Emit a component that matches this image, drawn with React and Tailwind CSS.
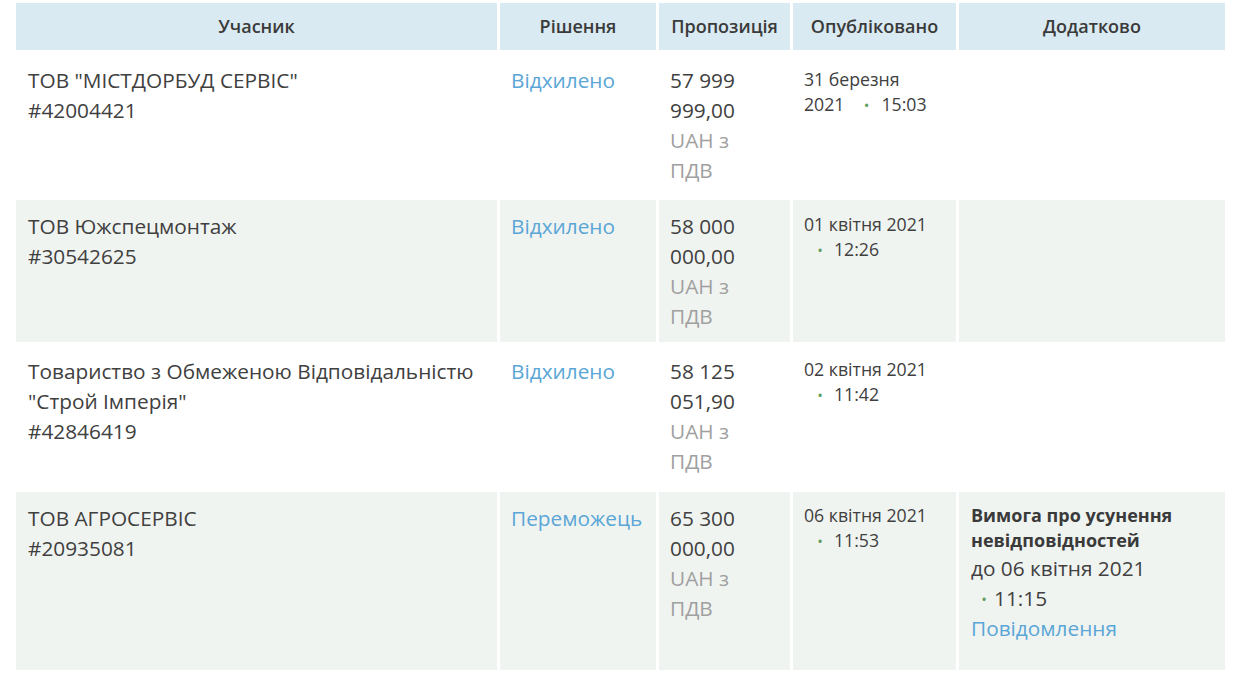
import React from "react";

const Dot = ({ ml }) => (
  <span className={`inline-block ${ml} w-[12px] text-center text-[15px] leading-none align-middle text-[#5f9f5c] relative top-[-1px]`}>•</span>
);

const headers = ["Учасник", "Рішення", "Пропозиція", "Опубліковано", "Додатково"];

const rows = [
  {
    name: ['ТОВ "МІСТДОРБУД СЕРВІС"'],
    code: "#42004421",
    decision: "Відхилено",
    amount: ["57 999", "999,00"],
    dateA: "31 березня",
    dateB: "2021",
    time: "15:03",
    bg: "bg-white",
    pt: "pt-[12px]",
    dpt: "pt-[14px]",
  },
  {
    name: ["ТОВ Южспецмонтаж"],
    code: "#30542625",
    decision: "Відхилено",
    amount: ["58 000", "000,00"],
    dateA: "01 квітня 2021",
    time: "12:26",
    bg: "bg-[#f0f4f1]",
    pt: "pt-[11px]",
    dpt: "pt-[12px]",
  },
  {
    name: ["Товариство з Обмеженою Відповідальністю", '"Строй Імперія"'],
    code: "#42846419",
    decision: "Відхилено",
    amount: ["58 125", "051,90"],
    dateA: "02 квітня 2021",
    time: "11:42",
    bg: "bg-white",
    pt: "pt-[11px]",
    dpt: "pt-[12px]",
  },
  {
    name: ["ТОВ АГРОСЕРВІС"],
    code: "#20935081",
    decision: "Переможець",
    amount: ["65 300", "000,00"],
    dateA: "06 квітня 2021",
    time: "11:53",
    bg: "bg-[#f0f4f1]",
    pt: "pt-[11px]",
    dpt: "pt-[11px]",
    extra: true,
  },
];

export default function App() {
  return (
    <div
      className="w-[1236px] h-[680px] bg-white text-[#404040] overflow-hidden"
      style={{ fontFamily: '"Open Sans", "Noto Sans", sans-serif' }}
    >
      <div className="pl-[16px] pt-[3px]">
        <div className="grid grid-cols-[481px_156px_131px_163px_266px] grid-rows-[47px_144px_142px_144px_178px] gap-[3px]">
          {headers.map((h) => (
            <div
              key={h}
              className="bg-[#d9eaf2] flex items-center justify-center text-[18px] font-semibold text-[#3a3a3a]"
            >
              {h}
            </div>
          ))}
          {rows.map((r, i) => (
            <React.Fragment key={i}>
              <div className={`${r.bg} px-[12px] ${r.pt} text-[20.8px] leading-[30px]`}>
                {r.name.map((n) => (
                  <div key={n}>{n}</div>
                ))}
                <div>{r.code}</div>
              </div>
              <div className={`${r.bg} px-[11px] ${r.pt} text-[20.8px] leading-[30px] text-[#5aa6d6]`}>
                {r.decision}
              </div>
              <div className={`${r.bg} px-[11px] ${r.pt} text-[20.8px] leading-[30px]`}>
                <div>{r.amount[0]}</div>
                <div>{r.amount[1]}</div>
                <div className="text-[#a0a0a0]">UAH з</div>
                <div className="text-[#a0a0a0]">ПДВ</div>
              </div>
              <div className={`${r.bg} px-[11px] ${r.dpt} text-[17.7px] leading-[25px]`}>
                {r.dateB ? (
                  <>
                    <div>{r.dateA}</div>
                    <div>
                      {r.dateB}
                      <Dot ml="ml-[16px]" />
                      <span className="ml-[9px]">{r.time}</span>
                    </div>
                  </>
                ) : (
                  <>
                    <div>{r.dateA}</div>
                    <div>
                      <Dot ml="ml-[10px]" />
                      <span className="ml-[8px]">{r.time}</span>
                    </div>
                  </>
                )}
              </div>
              <div className={`${r.bg} px-[12px] pt-[11px]`}>
                {r.extra && (
                  <>
                    <div className="text-[18px] leading-[25px] font-bold text-[#3a3a3a]">
                      <div>Вимога про усунення</div>
                      <div>невідповідностей</div>
                    </div>
                    <div className="text-[20.8px] leading-[30px]">
                      <div>до 06 квітня 2021</div>
                      <div>
                        <Dot ml="ml-[7px]" />
                        <span className="ml-[4px]">11:15</span>
                      </div>
                      <div className="text-[#5aa6d6]">Повідомлення</div>
                    </div>
                  </>
                )}
              </div>
            </React.Fragment>
          ))}
        </div>
      </div>
    </div>
  );
}
